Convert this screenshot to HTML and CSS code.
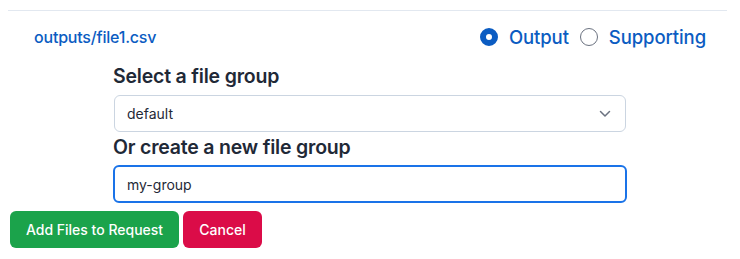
FILE: index.html
```html
<!DOCTYPE html>
<html>
<head>
<meta charset="utf-8">
<link rel="stylesheet" href="styles.css">
</head>
<body>
<div class="panel">
  <div class="row">
    <a class="file" href="#">outputs/file1.csv</a>
    <div class="radios">
      <label class="radio"><span class="dot checked"></span>Output</label>
      <label class="radio"><span class="dot"></span>Supporting</label>
    </div>
  </div>
  <div class="form">
    <div class="label">Select a file group</div>
    <div class="select">
      <span>default</span>
      <svg width="12" height="8" viewBox="0 0 12 8"><path d="M1.5 1.5 L6 6 L10.5 1.5" fill="none" stroke="#6b7280" stroke-width="1.5" stroke-linecap="round" stroke-linejoin="round"/></svg>
    </div>
    <div class="label">Or create a new file group</div>
    <div class="input">my-group</div>
  </div>
  <div class="buttons">
    <button class="btn add">Add Files to Request</button>
    <button class="btn cancel">Cancel</button>
  </div>
</div>
</body>
</html>
```
FILE: styles.css
```css
html, body { margin: 0; padding: 0; background: #fff; }
body { font-family: Inter, "Noto Sans", sans-serif; color: #1f2937; }
.panel { margin: 10px 13px 0 8px; border-top: 1px solid #e2e8f0; }
.row { display: flex; justify-content: space-between; align-items: center; padding: 15px 21px 0 26px; height: 22px; }
.file { color: #0b5cc2; font-size: 16px; font-weight: 500; text-decoration: none; letter-spacing: -0.2px; }
.radios { display: flex; gap: 11px; align-items: center; }
.radio { display: flex; align-items: center; gap: 11px; color: #0b5cc2; font-size: 18.5px; font-weight: 500; letter-spacing: -0.1px; }
.dot { width: 16px; height: 16px; border: 1px solid #6b7280; border-radius: 50%; box-sizing: content-box; display: inline-block; }
.dot.checked { width: 6px; height: 6px; border: 6px solid #0b5cc2; }
.form { padding: 0 100px 0 105px; margin-top: 14px; }
.label { font-size: 19.5px; font-weight: 600; color: #1f2937; height: 28px; line-height: 28px; letter-spacing: -0.2px; }
.select { margin: 5px 1px 1px 1px; height: 35px; border: 1px solid #cbd5e1; border-radius: 6px; display: flex; justify-content: space-between; align-items: center; padding: 0 14px 0 12px; font-size: 14px; color: #1f2937; }
.input { margin-top: 4px; height: 34px; border: 2px solid #1a73e8; border-radius: 6px; display: flex; align-items: center; padding: 0 12px; font-size: 14px; color: #1f2937; }
.buttons { display: flex; gap: 4px; margin-top: 8px; padding-left: 2px; }
.btn { border: none; border-radius: 6px; color: #fff; font-family: inherit; font-size: 14px; font-weight: 500; height: 37px; padding: 0; }
.add { background: #1ba34b; width: 169px; }
.cancel { background: #db0c48; width: 79px; }
```
